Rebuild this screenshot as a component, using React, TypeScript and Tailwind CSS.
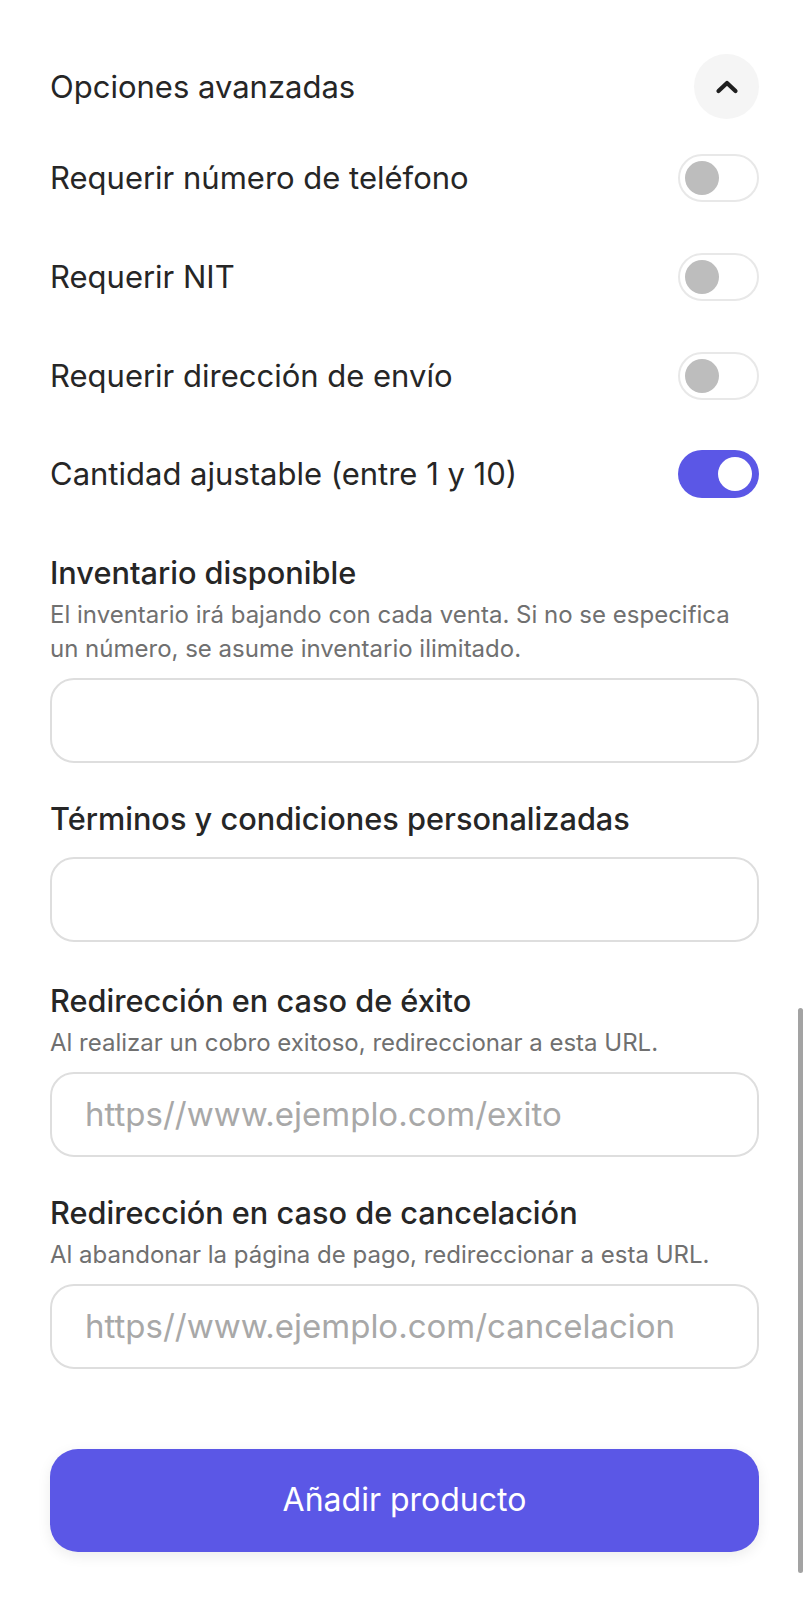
import { useState } from 'react';

function Toggle({ on }: { on: boolean }) {
  return (
    <div
      className={
        on
          ? 'flex h-[48px] w-[81px] shrink-0 items-center justify-end rounded-full bg-[#5b57e6] px-[7px]'
          : 'flex h-[48px] w-[81px] shrink-0 items-center justify-start rounded-full border-2 border-[#e8e8e8] bg-white px-[5px]'
      }
    >
      <div className={on ? 'h-[34px] w-[34px] rounded-full bg-white' : 'h-[34px] w-[34px] rounded-full bg-[#bdbdbd]'} />
    </div>
  );
}

function Field({
  label,
  hint,
  placeholder,
  className = '',
}: {
  label: string;
  hint?: string;
  placeholder?: string;
  className?: string;
}) {
  return (
    <div className={'flex flex-col ' + className}>
      <div className="text-[30.7px] font-medium leading-[36px] text-[#262626]">{label}</div>
      {hint && <div className="mt-[7px] whitespace-pre-line text-[24px] leading-[34px] text-[#707070]">{hint}</div>}
      <div
        className={
          (hint ? 'mt-[12px] ' : 'mt-[20px] ') +
          'flex h-[85px] items-center rounded-[24px] border-2 border-[#dedede] px-[33px] text-[33px] text-[#a8a8a8]'
        }
      >
        {placeholder}
      </div>
    </div>
  );
}

export default function App() {
  const [rows] = useState([
    { label: 'Requerir número de teléfono', on: false },
    { label: 'Requerir NIT', on: false },
    { label: 'Requerir dirección de envío', on: false },
    { label: 'Cantidad ajustable (entre 1 y 10)', on: true },
  ]);

  return (
    <div className="relative min-h-[1600px] bg-white font-['Inter','Noto_Sans',sans-serif] text-[#262626]">
      <div className="px-[50px] pt-[54px]">
        {/* Header */}
        <div className="flex h-[65px] items-center justify-between">
          <span className="text-[31px] leading-[36px]">Opciones avanzadas</span>
          <button className="flex h-[65px] w-[65px] items-center justify-center rounded-full bg-[#f5f5f5]">
            <svg width="24" height="15" viewBox="0 0 24 15" fill="none">
              <path d="M3.5 12 L12 4 L20.5 12" stroke="#1f1f1f" strokeWidth="4.2" strokeLinecap="round" strokeLinejoin="round" />
            </svg>
          </button>
        </div>

        {/* Toggles */}
        <div className="mt-[10px] flex flex-col">
          {rows.map((r) => (
            <div key={r.label} className="flex h-[98.7px] items-center justify-between">
              <span className="text-[31px] leading-[36px]">{r.label}</span>
              <Toggle on={r.on} />
            </div>
          ))}
        </div>

        <div className="mt-[31px] flex flex-col gap-[38px]">
          <Field
            label="Inventario disponible"
            hint={'El inventario irá bajando con cada venta. Si no se especifica\nun número, se asume inventario ilimitado.'}
          />
          <Field label="Términos y condiciones personalizadas" />
          <Field
            className="mt-[3px]"
            label="Redirección en caso de éxito"
            hint="Al realizar un cobro exitoso, redireccionar a esta URL."
            placeholder="https//www.ejemplo.com/exito"
          />
          <Field
            label="Redirección en caso de cancelación"
            hint="Al abandonar la página de pago, redireccionar a esta URL."
            placeholder="https//www.ejemplo.com/cancelacion"
          />
        </div>

        <button className="mt-[80px] flex h-[103px] w-full items-center justify-center rounded-[28px] bg-[#5b57e6] text-[32px] text-white shadow-[0_4px_14px_rgba(0,0,0,0.08)]">
          Añadir producto
        </button>
      </div>

      {/* Overlay scrollbar */}
      <div className="absolute right-[6px] top-[1008px] h-[565px] w-[5px] rounded-full bg-[#a3a3a3]" />
    </div>
  );
}
